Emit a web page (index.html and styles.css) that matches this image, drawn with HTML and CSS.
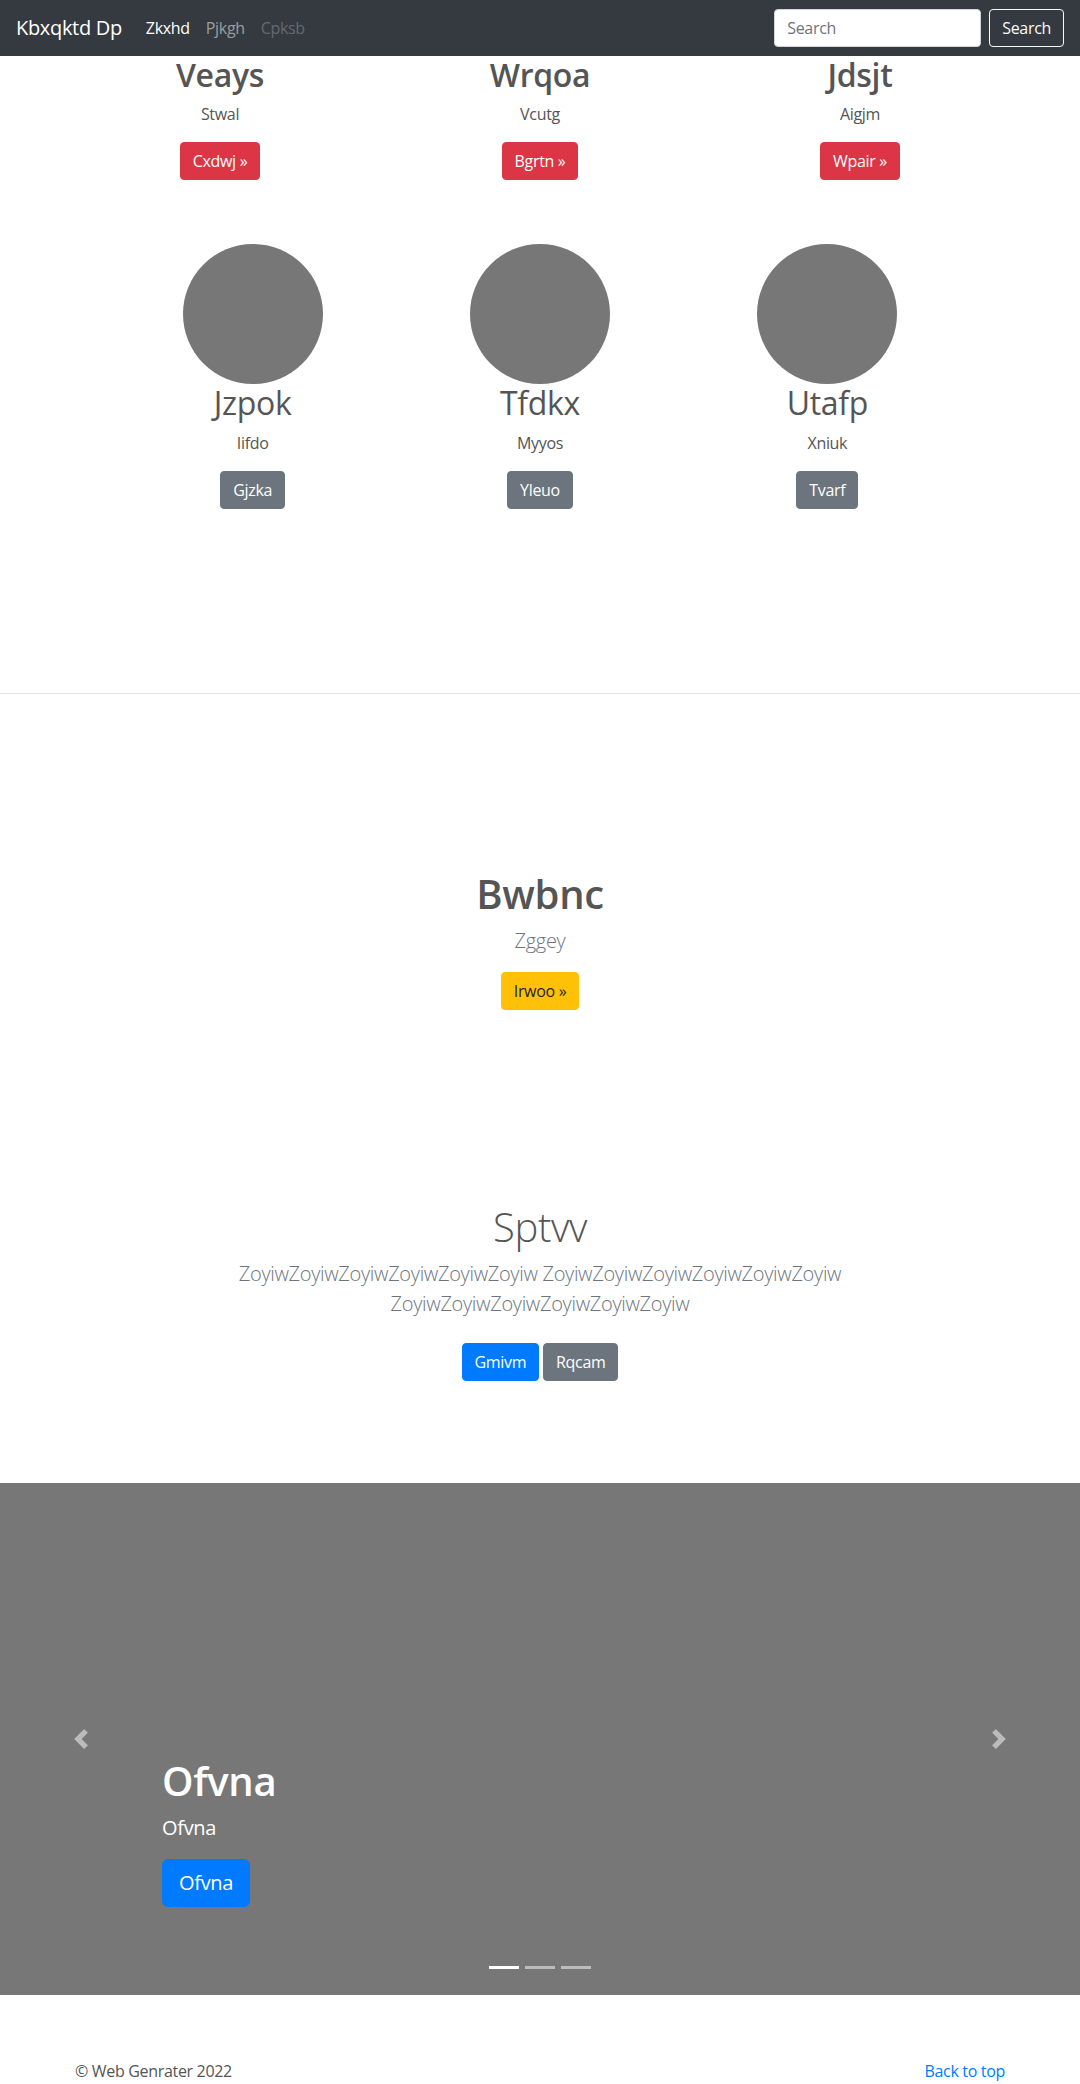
FILE: index.html
```html
<!DOCTYPE html>
<html lang="en">
<head>
<meta charset="utf-8">
<title>Kbxqktd Dp</title>
<link rel="stylesheet" href="styles.css">
</head>
<body>
<header class="navbar">
  <a class="brand" href="#">Kbxqktd Dp</a>
  <nav class="nav-links">
    <a class="nav-link active" href="#">Zkxhd</a>
    <a class="nav-link" href="#">Pjkgh</a>
    <a class="nav-link disabled" href="#">Cpksb</a>
  </nav>
  <form class="search-form">
    <input class="search-input" type="text" placeholder="Search">
    <button class="btn btn-outline-light" type="button">Search</button>
  </form>
</header>

<section class="row-top">
  <div class="col">
    <h2 class="col-title">Veays</h2>
    <p class="col-text">Stwal</p>
    <p class="col-text"><a class="btn btn-danger" href="#">Cxdwj &raquo;</a></p>
  </div>
  <div class="col">
    <h2 class="col-title">Wrqoa</h2>
    <p class="col-text">Vcutg</p>
    <p class="col-text"><a class="btn btn-danger" href="#">Bgrtn &raquo;</a></p>
  </div>
  <div class="col">
    <h2 class="col-title">Jdsjt</h2>
    <p class="col-text">Aigjm</p>
    <p class="col-text"><a class="btn btn-danger" href="#">Wpair &raquo;</a></p>
  </div>
</section>

<section class="row-circles">
  <div class="col">
    <svg class="circle" width="140" height="140" viewBox="0 0 140 140"><circle cx="70" cy="70" r="70" fill="#777"/></svg>
    <h2 class="circle-title">Jzpok</h2>
    <p class="col-text">Iifdo</p>
    <p class="col-text"><a class="btn btn-secondary" href="#">Gjzka</a></p>
  </div>
  <div class="col">
    <svg class="circle" width="140" height="140" viewBox="0 0 140 140"><circle cx="70" cy="70" r="70" fill="#777"/></svg>
    <h2 class="circle-title">Tfdkx</h2>
    <p class="col-text">Myyos</p>
    <p class="col-text"><a class="btn btn-secondary" href="#">Yleuo</a></p>
  </div>
  <div class="col">
    <svg class="circle" width="140" height="140" viewBox="0 0 140 140"><circle cx="70" cy="70" r="70" fill="#777"/></svg>
    <h2 class="circle-title">Utafp</h2>
    <p class="col-text">Xniuk</p>
    <p class="col-text"><a class="btn btn-secondary" href="#">Tvarf</a></p>
  </div>
</section>

<hr class="divider">

<section class="feature">
  <h1 class="feature-title">Bwbnc</h1>
  <p class="lead">Zggey</p>
  <p class="btn-line"><a class="btn btn-warning" href="#">Irwoo &raquo;</a></p>
</section>

<section class="jumbo">
  <div class="jumbo-inner">
    <h1 class="jumbo-title">Sptvv</h1>
    <p class="lead muted">ZoyiwZoyiwZoyiwZoyiwZoyiwZoyiw ZoyiwZoyiwZoyiwZoyiwZoyiwZoyiw ZoyiwZoyiwZoyiwZoyiwZoyiwZoyiw</p>
    <p class="jumbo-actions">
      <a class="btn btn-primary" href="#">Gmivm</a>
      <a class="btn btn-secondary" href="#">Rqcam</a>
    </p>
  </div>
</section>

<section class="carousel">
  <a class="control control-prev" href="#">
    <svg class="control-icon" width="20" height="20" viewBox="0 0 8 8"><path fill="#fff" d="M5.25 0l-4 4 4 4 1.5-1.5L4.25 4l2.5-2.5L5.25 0z"/></svg>
  </a>
  <a class="control control-next" href="#">
    <svg class="control-icon" width="20" height="20" viewBox="0 0 8 8"><path fill="#fff" d="M2.75 0l-1.5 1.5L3.75 4l-2.5 2.5L2.75 8l4-4-4-4z"/></svg>
  </a>
  <div class="caption">
    <h1 class="caption-title">Ofvna</h1>
    <p class="caption-text">Ofvna</p>
    <p class="caption-text"><a class="btn btn-primary btn-lg" href="#">Ofvna</a></p>
  </div>
  <div class="indicators">
    <span class="indicator active"></span>
    <span class="indicator"></span>
    <span class="indicator"></span>
  </div>
</section>

<footer class="footer">
  <p class="footer-text">&copy; Web Genrater 2022</p>
  <p class="footer-text"><a class="footer-link" href="#">Back to top</a></p>
</footer>
</body>
</html>
```
FILE: styles.css
```css
* { box-sizing: border-box; }

body {
  margin: 0;
  font-family: "Open Sans", "Noto Sans", sans-serif;
  font-size: 16px;
  line-height: 1.5;
  letter-spacing: -0.02em;
  color: #555;
  background: #fff;
}

a { text-decoration: none; }

/* navbar */
.navbar {
  height: 56px;
  background: #343a40;
  display: flex;
  align-items: center;
  padding: 8px 16px;
}
.brand {
  font-size: 20px;
  line-height: 30px;
  color: #fff;
  margin-right: 16px;
}
.nav-links { display: flex; }
.nav-link {
  padding: 8px;
  color: rgba(255,255,255,.5);
}
.nav-link.active { color: #fff; }
.nav-link.disabled { color: rgba(255,255,255,.25); }
.search-form {
  margin-left: auto;
  display: flex;
  align-items: center;
}
.search-input {
  width: 207px;
  height: 38px;
  margin-right: 8px;
  padding: 6px 12px;
  font-family: inherit;
  font-size: 16px;
  letter-spacing: inherit;
  color: #495057;
  background: #fff;
  border: 1px solid #ced4da;
  border-radius: 4px;
}
.search-input::placeholder { color: #6c757d; }

/* buttons */
.btn {
  display: inline-block;
  padding: 6px 12px;
  font-family: inherit;
  font-size: 16px;
  line-height: 24px;
  letter-spacing: inherit;
  border: 1px solid transparent;
  border-radius: 4px;
  color: #fff;
  vertical-align: middle;
}
.btn-outline-light {
  background: transparent;
  color: #f8f9fa;
  border-color: #f8f9fa;
}
.btn-danger { background: #dc3545; border-color: #dc3545; }
.btn-secondary { background: #6c757d; border-color: #6c757d; }
.btn-primary { background: #007bff; border-color: #007bff; }
.btn-warning { background: #ffc107; border-color: #ffc107; color: #212529; }
.btn-lg {
  padding: 8px 16px;
  font-size: 20px;
  line-height: 30px;
  border-radius: 6px;
}

/* top row */
.row-top {
  width: 960px;
  margin: 0 auto;
  display: grid;
  grid-template-columns: repeat(3, 1fr);
  text-align: center;
}
.col-title {
  margin: 0 0 8px;
  font-size: 32px;
  line-height: 1.2;
  font-weight: 600;
}
.col-text { margin: 0 0 16px; }

/* circle row */
.row-circles {
  width: 862px;
  margin: 48px auto 0;
  display: grid;
  grid-template-columns: repeat(3, 1fr);
  text-align: center;
}
.circle {
  display: block;
  margin: 0 auto;
}
.circle-title {
  margin: 0 0 8px;
  font-size: 32px;
  line-height: 1.2;
  font-weight: 400;
}

.divider {
  margin: 168px 0 0;
  border: 0;
  border-top: 1px solid #e5e5e5;
}

/* feature */
.feature {
  text-align: center;
  padding-top: 176px;
}
.feature-title {
  margin: 0 0 8px;
  font-size: 40px;
  line-height: 1.2;
  font-weight: 600;
}
.lead {
  margin: 0 0 16px;
  font-size: 20px;
  line-height: 30px;
  font-weight: 300;
  color: #6c757d;
}
.btn-line { margin: 0; }

/* jumbotron */
.jumbo {
  text-align: center;
  padding-top: 193px;
}
.jumbo-inner {
  width: 680px;
  margin: 0 auto;
}
.jumbo-title {
  margin: 0 0 8px;
  font-size: 40px;
  line-height: 1.2;
  font-weight: 300;
}
.muted { color: #6c757d; }
.jumbo-actions { margin: 0; }
.jumbo-actions .btn { margin: 8px 0; }

/* carousel */
.carousel {
  position: relative;
  height: 512px;
  margin-top: 94px;
  background: #777;
}
.control {
  position: absolute;
  top: 0;
  bottom: 0;
  width: 15%;
  display: flex;
  align-items: center;
  justify-content: center;
  opacity: .5;
}
.control-prev { left: 0; }
.control-next { right: 0; }
.control-icon { display: block; }
.caption {
  position: absolute;
  left: 15%;
  right: 15%;
  bottom: 52px;
  padding: 20px 0;
  color: #fff;
  text-align: left;
}
.caption-title {
  margin: 0 0 8px;
  font-size: 40px;
  line-height: 1.2;
  font-weight: 600;
}
.caption-text {
  margin: 0 0 16px;
  font-size: 20px;
  line-height: 30px;
}
.indicators {
  position: absolute;
  left: 0;
  right: 0;
  bottom: 26px;
  display: flex;
  justify-content: center;
}
.indicator {
  width: 30px;
  height: 3px;
  margin: 0 3px;
  background: #fff;
  opacity: .5;
}
.indicator.active { opacity: 1; }

/* footer */
.footer {
  width: 960px;
  margin: 0 auto;
  padding: 64px 15px 0;
  display: flex;
  justify-content: space-between;
}
.footer-text { margin: 0 0 16px; }
.footer-link { color: #007bff; }
```
